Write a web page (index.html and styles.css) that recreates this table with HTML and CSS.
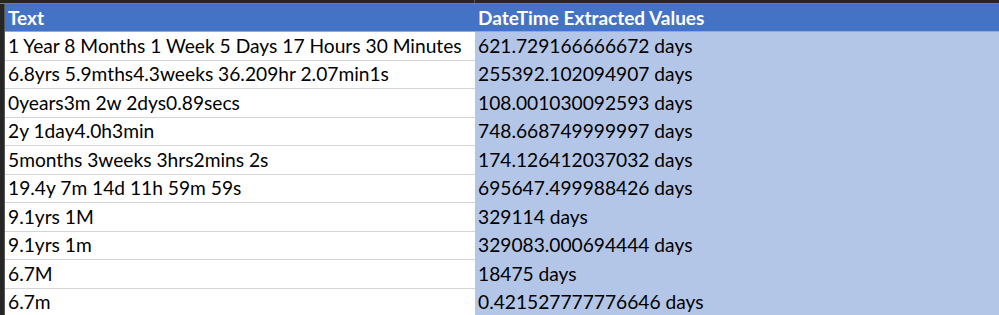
FILE: index.html
```html
<!DOCTYPE html>
<html>
<head>
<meta charset="utf-8">
<link rel="stylesheet" href="styles.css">
</head>
<body>
<div class="sheet">
  <div class="topbar"><div class="tb1"></div><div class="tb2"></div></div>
  <div class="main">
    <div class="gutter"></div>
    <div class="table">
      <div class="cell head c1">Text</div>
      <div class="cell head c2">DateTime Extracted Values</div>
      <div class="cell c1">1 Year 8 Months 1 Week 5 Days 17 Hours 30 Minutes</div>
      <div class="cell c2">621.729166666672 days</div>
      <div class="cell c1">6.8yrs 5.9mths4.3weeks 36.209hr 2.07min1s</div>
      <div class="cell c2">255392.102094907 days</div>
      <div class="cell c1">0years3m 2w 2dys0.89secs</div>
      <div class="cell c2">108.001030092593 days</div>
      <div class="cell c1">2y 1day4.0h3min</div>
      <div class="cell c2">748.668749999997 days</div>
      <div class="cell c1">5months 3weeks 3hrs2mins 2s</div>
      <div class="cell c2">174.126412037032 days</div>
      <div class="cell c1">19.4y 7m 14d 11h 59m 59s</div>
      <div class="cell c2">695647.499988426 days</div>
      <div class="cell c1">9.1yrs 1M</div>
      <div class="cell c2">329114 days</div>
      <div class="cell c1">9.1yrs 1m</div>
      <div class="cell c2">329083.000694444 days</div>
      <div class="cell c1">6.7M</div>
      <div class="cell c2">18475 days</div>
      <div class="cell c1">6.7m</div>
      <div class="cell c2">0.421527777776646 days</div>
    </div>
  </div>
</div>
</body>
</html>
```
FILE: styles.css
```css
html, body {
  margin: 0;
  padding: 0;
  background: #1f1f1f;
}
.sheet {
  width: 999px;
  height: 315px;
  overflow: hidden;
  font-family: Lato, "Open Sans", sans-serif;
}
.topbar {
  display: grid;
  grid-template-columns: 475px 1fr;
  height: 3px;
  border-bottom: 1px solid #7a7a7a;
}
.tb1 {
  background: #262626;
  border-right: 1px solid #555;
}
.tb2 {
  background: #262626;
}
.main {
  display: flex;
}
.gutter {
  width: 4px;
  background: #262626;
  border-right: 1px solid #555;
}
.table {
  flex: 1;
  display: grid;
  grid-template-columns: 470px 1fr;
  grid-template-rows: 28px repeat(10, 28.5px);
}
.cell {
  box-sizing: border-box;
  display: flex;
  align-items: flex-end;
  padding: 0 0 3px 3px;
  font-size: 19.2px;
  color: #000;
  white-space: nowrap;
  border-bottom: 1px solid #d4d4d4;
}
.c1 {
  background: #fff;
}
.c2 {
  background: #b4c6e7;
  border-bottom-color: #b4c6e7;
}
.head {
  background: #4472c4;
  color: #fff;
  font-weight: bold;
  font-size: 19px;
  padding-bottom: 2px;
  border-bottom: 1px solid #8ea9db;
}
```
